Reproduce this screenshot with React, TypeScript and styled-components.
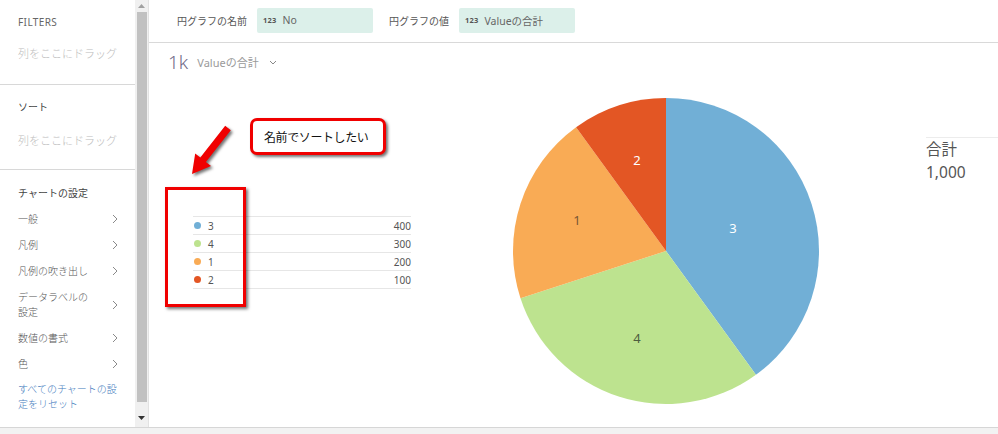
import React from "react";
import styled, { createGlobalStyle } from "styled-components";

const Global = createGlobalStyle`
  html, body { margin: 0; padding: 0; background: #fff; }
  body { font-family: "Segoe UI", "Noto Sans", "Noto Sans CJK JP", sans-serif; }
  * { box-sizing: border-box; }
`;

const Page = styled.div`
  width: 998px;
  height: 434px;
  display: flex;
  flex-direction: column;
  overflow: hidden;
`;

const Workspace = styled.div`
  flex: 0 0 427px;
  display: flex;
`;

const Footer = styled.div`
  flex: 1;
  border-top: 1px solid #d6d6d6;
  background: #f2f2f2;
`;

const Sidebar = styled.aside`
  width: 149px;
  display: flex;
  border-right: 1px solid #e2e2e2;
`;

const SideContent = styled.div`
  width: 135px;
  display: flex;
  flex-direction: column;
`;

const Section = styled.div<{ $pt: number; $pb: number; $divider?: boolean }>`
  padding: ${(p) => p.$pt}px 0 ${(p) => p.$pb}px 18px;
  border-bottom: ${(p) => (p.$divider ? "1px solid #d8d8d8" : "none")};
  display: flex;
  flex-direction: column;
`;

const SectionTitle = styled.div<{ $small?: boolean }>`
  font-size: 10px;
  letter-spacing: ${(p) => (p.$small ? "0.4px" : "0")};
  line-height: 16px;
  font-weight: ${(p) => (p.$small ? 400 : 400)};
  color: ${(p) => (p.$small ? "#666" : "#444")};
`;

const DropHint = styled.div<{ $mt: number }>`
  margin-top: ${(p) => p.$mt}px;
  font-size: 11px;
  line-height: 20px;
  font-weight: 300;
  color: #bdbdbd;
`;

const MenuList = styled.div`
  margin-top: 5px;
  display: flex;
  flex-direction: column;
`;

const MenuRow = styled.div`
  min-height: 26px;
  padding: 5.5px 17px 5.5px 0;
  display: flex;
  align-items: center;
  justify-content: space-between;
  font-size: 10px;
  line-height: 15px;
  font-weight: 300;
  color: #555;
`;

const ResetLink = styled.div`
  margin-top: 5px;
  padding-right: 17px;
  font-size: 10px;
  line-height: 15px;
  font-weight: 300;
  color: #3f7bbd;
`;

const Scrollbar = styled.div`
  width: 13px;
  background: #f0f0f0;
  display: flex;
  flex-direction: column;
  align-items: center;
`;

const ScrollArrow = styled.div<{ $h: number; $down?: boolean }>`
  height: ${(p) => p.$h}px;
  width: 100%;
  display: flex;
  justify-content: center;
  align-items: ${(p) => (p.$down ? "flex-end" : "center")};
  padding-bottom: ${(p) => (p.$down ? "7px" : "0")};
`;

const ScrollThumb = styled.div`
  width: 10px;
  flex: 1;
  background: #c1c1c1;
`;

const Main = styled.main`
  flex: 1;
  display: flex;
  flex-direction: column;
`;

const TopBar = styled.div`
  height: 43px;
  border-bottom: 1px solid #d9d9d9;
  display: flex;
  align-items: center;
  padding: 0 0 2px 28px;
`;

const FieldLabel = styled.div<{ $w: number }>`
  width: ${(p) => p.$w}px;
  font-size: 10px;
  color: #555;
`;

const Chip = styled.div`
  width: 116px;
  height: 25px;
  margin-right: 16px;
  border-radius: 2px;
  background: #dcf0ea;
  display: flex;
  align-items: center;
  padding-left: 6px;
  gap: 6px;
  font-size: 10.5px;
  color: #666;
`;

const ChipType = styled.span`
  font-size: 7.5px;
  font-weight: 700;
  color: #555;
  letter-spacing: 0.2px;
`;

const Body = styled.div`
  flex: 1;
  position: relative;
  display: flex;
`;

const LeftCol = styled.div`
  width: 357px;
  padding-left: 19px;
  display: flex;
  flex-direction: column;
`;

const Header = styled.div`
  margin-top: 7px;
  height: 24px;
  display: flex;
  align-items: center;
  gap: 9px;
`;

const BigValue = styled.span`
  font-size: 19px;
  color: #6f6a87;
  font-weight: 300;
`;

const MeasureName = styled.span`
  font-size: 11px;
  color: #9a9a9a;
  display: flex;
  align-items: center;
  gap: 10px;
`;

const LegendTable = styled.div`
  margin-top: 142px;
  margin-left: 25px;
  width: 218px;
  border-top: 1px solid #e6e6e6;
`;

const LegendRow = styled.div`
  height: 18px;
  border-bottom: 1px solid #e6e6e6;
  display: flex;
  align-items: center;
  font-size: 10px;
  color: #555;
`;

const Dot = styled.span<{ $c: string }>`
  width: 7px;
  height: 7px;
  border-radius: 50%;
  background: ${(p) => p.$c};
  margin: 0 7px 0 1px;
`;

const LegendName = styled.span`
  flex: 1;
`;

const PieBox = styled.div`
  margin-top: 48px;
  width: 320px;
  height: 320px;
`;

const TotalBox = styled.div`
  margin: 94px 0 0 100px;
  flex: 1;
  height: 50px;
  border-top: 1px solid #ececec;
  display: flex;
  flex-direction: column;
  font-size: 15.5px;
  line-height: 23px;
  color: #555;
`;

const RedBox = styled.div`
  position: absolute;
  left: 16px;
  top: 144px;
  width: 81px;
  height: 120px;
  border: 3px solid #f00000;
  box-shadow: 2px 2px 3px rgba(0, 0, 0, 0.55);
`;

const Callout = styled.div`
  position: absolute;
  left: 101px;
  top: 75px;
  width: 136px;
  height: 37px;
  border: 3px solid #f00000;
  border-radius: 7px;
  background: #fff;
  box-shadow: 2px 2px 3px rgba(0, 0, 0, 0.55);
  display: flex;
  align-items: center;
  padding-left: 11px;
  white-space: nowrap;
  font-size: 12px;
  letter-spacing: -0.4px;
  color: #111;
`;

const ArrowSvg = styled.svg`
  position: absolute;
  left: 0;
  top: 0;
  overflow: visible;
  filter: drop-shadow(2px 2px 1.5px rgba(0, 0, 0, 0.55));
`;

const Chevron = () => (
  <svg width="6" height="10" viewBox="0 0 6 10">
    <path d="M1 1 L5 5 L1 9" fill="none" stroke="#8a8a8a" strokeWidth="1" />
  </svg>
);

const legend = [
  { name: "3", value: 400, color: "#71afd6" },
  { name: "4", value: 300, color: "#bde38f" },
  { name: "1", value: 200, color: "#f9ab55" },
  { name: "2", value: 100, color: "#e35624" },
];

const menu = [
  ["一般"],
  ["凡例"],
  ["凡例の吹き出し"],
  ["データラベルの", "設定"],
  ["数値の書式"],
  ["色"],
];

export default function App() {
  return (
    <Page>
      <Global />
      <Workspace>
        <Sidebar>
          <SideContent>
            <Section $pt={14} $pb={20} $divider>
              <SectionTitle $small>FILTERS</SectionTitle>
              <DropHint $mt={14}>列をここにドラッグ</DropHint>
            </Section>
            <Section $pt={14} $pb={18} $divider>
              <SectionTitle>ソート</SectionTitle>
              <DropHint $mt={16}>列をここにドラッグ</DropHint>
            </Section>
            <Section $pt={15} $pb={0}>
              <SectionTitle>チャートの設定</SectionTitle>
              <MenuList>
                {menu.map((lines) => (
                  <MenuRow key={lines.join("")}>
                    <div>
                      {lines.map((l) => (
                        <div key={l}>{l}</div>
                      ))}
                    </div>
                    <Chevron />
                  </MenuRow>
                ))}
              </MenuList>
              <ResetLink>すべてのチャートの設定をリセット</ResetLink>
            </Section>
          </SideContent>
          <Scrollbar>
            <ScrollArrow $h={12}>
              <svg width="7" height="4" viewBox="0 0 7 4">
                <path d="M0 4 L3.5 0 L7 4 Z" fill="#a0a0a0" />
              </svg>
            </ScrollArrow>
            <ScrollThumb />
            <ScrollArrow $h={25} $down>
              <svg width="7" height="4" viewBox="0 0 7 4">
                <path d="M0 0 L7 0 L3.5 4 Z" fill="#333" />
              </svg>
            </ScrollArrow>
          </Scrollbar>
        </Sidebar>
        <Main>
          <TopBar>
            <FieldLabel $w={80}>円グラフの名前</FieldLabel>
            <Chip>
              <ChipType>123</ChipType>No
            </Chip>
            <FieldLabel $w={70}>円グラフの値</FieldLabel>
            <Chip>
              <ChipType>123</ChipType>Valueの合計
            </Chip>
          </TopBar>
          <Body>
            <LeftCol>
              <Header>
                <BigValue>1k</BigValue>
                <MeasureName>
                  Valueの合計
                  <svg width="8" height="5" viewBox="0 0 8 5">
                    <path d="M1 1 L4 4 L7 1" fill="none" stroke="#888" strokeWidth="1" />
                  </svg>
                </MeasureName>
              </Header>
              <LegendTable>
                {legend.map((d) => (
                  <LegendRow key={d.name}>
                    <Dot $c={d.color} />
                    <LegendName>{d.name}</LegendName>
                    <span>{d.value}</span>
                  </LegendRow>
                ))}
              </LegendTable>
            </LeftCol>
            <PieBox>
              <svg width="320" height="320" viewBox="0 0 320 320">
                <path d="M160 160 L160 7 A153 153 0 0 1 249.93 283.78 Z" fill="#71afd6" />
                <path d="M160 160 L249.93 283.78 A153 153 0 0 1 14.49 207.28 Z" fill="#bde38f" />
                <path d="M160 160 L14.49 207.28 A153 153 0 0 1 70.07 36.22 Z" fill="#f9ab55" />
                <path d="M160 160 L70.07 36.22 A153 153 0 0 1 160 7 Z" fill="#e35624" />
                <g fontSize="13" fontFamily="'Segoe UI','Noto Sans',sans-serif" textAnchor="middle" dominantBaseline="central">
                  <text x="227" y="137" fill="#fff">3</text>
                  <text x="131" y="69" fill="#fff">2</text>
                  <text x="71" y="129" fill="#7a5634">1</text>
                  <text x="131" y="247" fill="#4d5e40">4</text>
                </g>
              </svg>
            </PieBox>
            <TotalBox>
              <div>合計</div>
              <div>1,000</div>
            </TotalBox>
            <ArrowSvg width="100" height="140">
              <polygon
                points="81.8,87.2 56.9,119 62,123 43,131 46.2,110.6 51.3,114.6 76.2,82.8"
                fill="#f00000"
              />
            </ArrowSvg>
            <RedBox />
            <Callout>名前でソートしたい</Callout>
          </Body>
        </Main>
      </Workspace>
      <Footer />
    </Page>
  );
}
